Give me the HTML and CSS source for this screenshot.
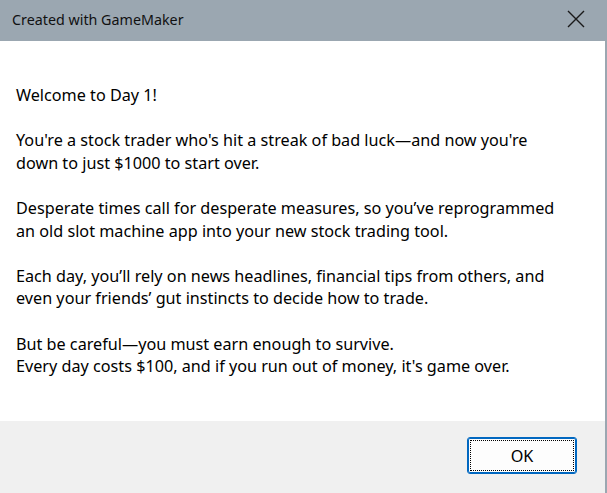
FILE: index.html
```html
<!DOCTYPE html>
<html>
<head>
<meta charset="utf-8">
<link rel="stylesheet" href="styles.css">
</head>
<body>
<div class="window">
  <div class="titlebar">
    <span class="title">Created with GameMaker</span>
    <svg class="close" width="18" height="18" viewBox="0 0 18 18"><path d="M1 1 L17 17 M17 1 L1 17" stroke="#1a1a1a" stroke-width="1.4" fill="none"/></svg>
  </div>
  <div class="content">
    <p>Welcome to Day 1!</p>
    <p>You're a stock trader who's hit a streak of bad luck—and now you're<br>down to just $1000 to start over.</p>
    <p>Desperate times call for desperate measures, so you’ve reprogrammed<br>an old slot machine app into your new stock trading tool.</p>
    <p>Each day, you’ll rely on news headlines, financial tips from others, and<br>even your friends’ gut instincts to decide how to trade.</p>
    <p>But be careful—you must earn enough to survive.<br>Every day costs $100, and if you run out of money, it's game over.</p>
  </div>
  <div class="footer">
    <button class="ok"><span class="focus">OK</span></button>
  </div>
</div>
</body>
</html>
```

FILE: styles.css
```css
html, body {
  margin: 0;
  padding: 0;
  width: 607px;
  height: 493px;
  overflow: hidden;
  background: #9ba7b1;
}
.window {
  width: 605px;
  height: 493px;
  display: flex;
  flex-direction: column;
  font-family: "Noto Sans", sans-serif;
  color: #000;
}
.titlebar {
  height: 41px;
  flex: none;
  background: #9ba7b1;
  display: flex;
  align-items: center;
  justify-content: space-between;
  padding: 0 20px 0 12px;
  box-sizing: border-box;
}
.title {
  font-size: 14.3px;
  color: #111;
  margin-top: -3px;
}
.close {
  margin-top: -3px;
}
.content {
  flex: 1;
  background: #fff;
  padding: 43px 0 0 16px;
  box-sizing: border-box;
}
.content p {
  margin: 0 0 22.6px 0;
  font-size: 16.2px;
  line-height: 22.6px;
  white-space: nowrap;
}
.footer {
  height: 72px;
  flex: none;
  background: #f0f0f0;
  display: flex;
  justify-content: flex-end;
  align-items: flex-start;
  padding: 16px 28px 0 0;
  box-sizing: border-box;
}
.ok {
  width: 110px;
  height: 37px;
  border: 1px solid #0067c0;
  box-shadow: inset 0 0 0 1px #0067c0;
  border-radius: 3px;
  background: #fdfdfd;
  padding: 2px;
  box-sizing: border-box;
  font-family: "Noto Sans", sans-serif;
  font-size: 16.2px;
  color: #000;
}
.focus {
  display: flex;
  align-items: center;
  justify-content: center;
  width: 100%;
  height: 100%;
  border: 1px dotted #000;
  box-sizing: border-box;
}
```
